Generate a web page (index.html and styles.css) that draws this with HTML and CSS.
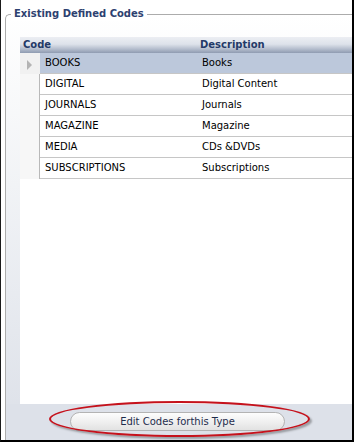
FILE: index.html
```html
<!DOCTYPE html>
<html lang="en">
<head>
  <meta charset="UTF-8">
  <meta name="viewport" content="width=device-width, initial-scale=1.0">
  <link rel="stylesheet" href="styles.css">
  <title>Existing Defined Codes</title>
</head>
<body>
  <div class="window">
    <div class="group">
      <div class="groupTitle">Existing Defined Codes</div>

      <div class="grid">
        <div class="gridHeader">
          <div class="colCode">Code</div>
          <div class="colDesc">Description</div>
        </div>

        <div class="gridRow selected">
          <div class="rowHead"><span class="arrow"></span></div>
          <div class="cellCode">BOOKS</div>
          <div class="cellDesc">Books</div>
        </div>
        <div class="gridRow">
          <div class="rowHead"></div>
          <div class="cellCode">DIGITAL</div>
          <div class="cellDesc">Digital Content</div>
        </div>
        <div class="gridRow">
          <div class="rowHead"></div>
          <div class="cellCode">JOURNALS</div>
          <div class="cellDesc">Journals</div>
        </div>
        <div class="gridRow">
          <div class="rowHead"></div>
          <div class="cellCode">MAGAZINE</div>
          <div class="cellDesc">Magazine</div>
        </div>
        <div class="gridRow">
          <div class="rowHead"></div>
          <div class="cellCode">MEDIA</div>
          <div class="cellDesc">CDs &amp;DVDs</div>
        </div>
        <div class="gridRow">
          <div class="rowHead"></div>
          <div class="cellCode">SUBSCRIPTIONS</div>
          <div class="cellDesc">Subscriptions</div>
        </div>
      </div>

      <div class="footer">
        <button class="editButton">Edit Codes forthis Type</button>
      </div>
    </div>

    <!-- red callout drawn over the button -->
    <div class="callout"></div>
  </div>
</body>
</html>
```

FILE: styles.css
```css
body {
  margin: 0;
  font-family: "DejaVu Sans", Verdana, sans-serif;
  font-size: 10px;
  background-color: #ffffff;
}

.window {
  position: relative;
  width: 354px;
  height: 442px;
  box-sizing: border-box;
  border-left: 1px solid #1a1a1a;
  border-right: 2px solid #000000;
  border-bottom: 2px solid #000000;
  overflow: hidden;
}

.group {
  position: relative;
  margin-top: 14px;
  margin-left: 4px;
  height: 426px;
  box-sizing: border-box;
  border-top: 1px solid #acacac;
  border-left: 1px solid #acacac;
  border-top-left-radius: 5px;
  background: linear-gradient(#ffffff, #f1f3f6 40%, #dce0e8);
  display: flex;
  flex-direction: column;
}

.groupTitle {
  position: absolute;
  top: -8px;
  left: 5px;
  padding: 0 3px;
  background-color: #ffffff;
  color: #2d4170;
  font-weight: bold;
  font-size: 10px;
  line-height: 14px;
}

.grid {
  margin-top: 22px;
  margin-left: 14px;
  height: 367px;
  background-color: #ffffff;
}

.gridHeader {
  display: flex;
  height: 16px;
  line-height: 16px;
  background: linear-gradient(#eceef3, #dde2ea 45%, #b4bdcd 75%, #8f9bb1);
  color: #243a68;
  font-weight: bold;
}

.colCode {
  width: 177px;
  padding-left: 3px;
  box-sizing: border-box;
}

.colDesc {
  padding-left: 3px;
}

.gridRow {
  display: flex;
  height: 21px;
  line-height: 20px;
  color: #000000;
}

.gridRow:first-of-type {
  height: 22px;
  line-height: 21px;
}

.rowHead {
  width: 19px;
  background-color: #f7f7f7;
  border-right: 1px solid #b9b9b9;
  position: relative;
}

.cellCode,
.cellDesc {
  border-bottom: 1px solid #c6c6c6;
  padding-left: 5px;
  box-sizing: border-box;
}

.cellCode {
  width: 157px;
}

.cellDesc {
  flex: 1;
}

.selected .cellCode,
.selected .cellDesc {
  background-color: #bcc8db;
}

.selected .rowHead {
  background-color: #f1f1f1;
  border-right-color: #f1f1f1;
}

.arrow {
  position: absolute;
  left: 7px;
  top: 7px;
  width: 0;
  height: 0;
  border-left: 5px solid #b4b4b4;
  border-top: 5px solid transparent;
  border-bottom: 5px solid transparent;
}

.footer {
  padding-top: 8px;
  padding-left: 64px;
  background-color: #dde1e9;
  flex: 1;
}

.editButton {
  display: block;
  width: 215px;
  height: 19px;
  padding: 0;
  border: 1px solid #b3b3b3;
  border-radius: 10px;
  background: linear-gradient(#fdfdfd, #f0f0f0 50%, #e2e2e2);
  color: #1e2c4c;
  font-family: "DejaVu Sans", Verdana, sans-serif;
  font-size: 10px;
}

.callout {
  position: absolute;
  left: 48px;
  top: 401px;
  width: 261px;
  height: 36px;
  box-sizing: border-box;
  border: 2px solid #c5121c;
  border-radius: 50%;
  box-shadow: 2px 2px 2px rgba(0, 0, 0, 0.3);
}
```
